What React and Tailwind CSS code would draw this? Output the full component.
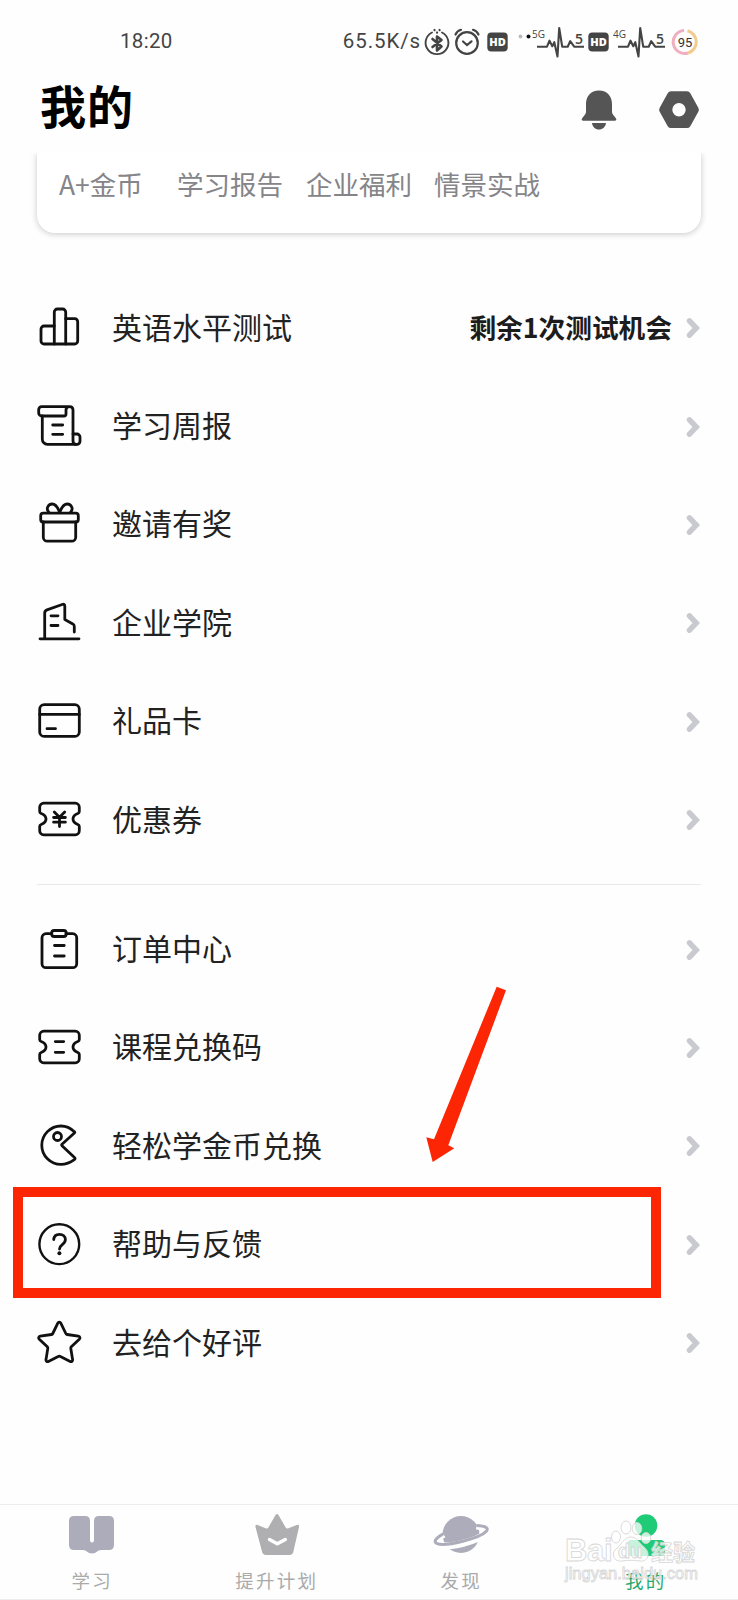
import clsx from "clsx";

const Icon = ({ children }) => (
  <svg
    viewBox="0 0 48 48"
    className="h-12 w-12 shrink-0"
    fill="none"
    stroke="#111"
    strokeWidth="2.800"
    strokeLinecap="round"
    strokeLinejoin="round"
  >
    {children}
  </svg>
);

const ticketPath =
  "M7.700 7.200h31.600a4 4 0 0 1 4 4v4.300c0 1-.6 1.600-1.500 2-6.400 2.600-6.400 8.400 0 11 .9.4 1.500 1 1.500 2v4.300a4 4 0 0 1-4 4H7.700a4 4 0 0 1-4-4v-4.300c0-1 .6-1.600 1.500-2 6.400-2.600 6.400-8.400 0-11-.9-.4-1.500-1-1.500-2v-4.300a4 4 0 0 1 4-4z";

const topItems = [
  {
    label: "英语水平测试",
    extra: "剩余1次测试机会",
    icon: (
      <>
        <path d="M18.300 22H8a3 3 0 0 0-3 3v12a3 3 0 0 0 3 3h30.700a3 3 0 0 0 3-3V17.700a3 3 0 0 0-3-3h-9" />
        <path d="M18.300 40V8a3 3 0 0 1 3-3h5.400a3 3 0 0 1 3 3v32" />
      </>
    ),
  },
  {
    label: "学习周报",
    icon: (
      <>
        <path d="M33.500 3.600H5.700a3 3 0 0 0-3 3V10a3 3 0 0 0 3 3H28c1.300 0 2-.7 2-2V7c0-2.300 1.200-3.400 3.500-3.400S37 4.700 37 7v31c0 2 1.300 3.300 3.300 3.300" />
        <path d="M6.300 13v23.300a5 5 0 0 0 5 5H41a3 3 0 0 0 3-3V34a3 3 0 0 0-3-3h-4M16.700 22h10M16.700 31.300h10" />
      </>
    ),
  },
  {
    label: "邀请有奖",
    icon: (
      <>
        <rect x="4.700" y="12.200" width="37.600" height="8.800" rx="2.500" />
        <path d="M7.300 21v15.200a4 4 0 0 0 4 4h24.400a4 4 0 0 0 4-4V21" />
        <path d="M13 11.500C9.500 8 12 3 16.200 3c4 0 6 4.500 7.500 8.500C25.200 7.500 27.200 3 31.200 3 35.400 3 38 8 34.400 11.500" />
      </>
    ),
  },
  {
    label: "企业学院",
    icon: (
      <path d="M4 39.800h39M8.700 39.500V14c0-1.700.8-2.700 2.300-3.200l15.200-5.300c1.700-.6 2.600 0 2.600 1.700v13.300l8 4.400c1 .6 1.500 1.400 1.500 2.500V33M15 16.800h7M15 26.500h7" />
    ),
  },
  {
    label: "礼品卡",
    icon: (
      <>
        <rect x="3.700" y="6.700" width="39.600" height="31.700" rx="4.500" />
        <path d="M3.700 16.400h39.600M11 30.700h8.500" />
      </>
    ),
  },
  {
    label: "优惠券",
    icon: (
      <>
        <path d={ticketPath} />
        <path d="M18.300 16l5.200 5.200 5.200-5.200M17.600 21.500h11.800M17.600 26.200h11.800M23.500 21.500v9" />
      </>
    ),
  },
];

const bottomItems = [
  {
    label: "订单中心",
    icon: (
      <>
        <path d="M15.700 7.700H10a4 4 0 0 0-4 4v26a4 4 0 0 0 4 4h26.700a4 4 0 0 0 4-4v-26a4 4 0 0 0-4-4H30" />
        <rect x="15.700" y="4.500" width="14.500" height="6" rx="2.500" />
        <path d="M18.500 19.500h9.700M18.500 30h9.700" />
      </>
    ),
  },
  {
    label: "课程兑换码",
    icon: (
      <>
        <path d={ticketPath} />
        <path d="M19.300 17.600h8.400M19.300 28.300h8.400" />
      </>
    ),
  },
  {
    label: "轻松学金币兑换",
    icon: (
      <>
        <path d="M38.300 9.700C34 5.500 29.500 4 25 4a19.200 19.200 0 1 0 0 38.400c4.500 0 9-1.500 13.300-4.700 1-.8 1-1.500.2-2.200L26 23.700c-.5-.5-.5-.9 0-1.400L38.400 11c.6-.5.5-.8-.1-1.300z" />
        <circle cx="21.500" cy="14.500" r="4" />
      </>
    ),
  },
  {
    label: "帮助与反馈",
    highlighted: true,
    icon: (
      <>
        <circle cx="23.300" cy="23.200" r="19.900" strokeWidth="2.400" />
        <path d="M17.700 18.500c.3-3.200 2.600-5.200 5.800-5.200 3.400 0 5.900 2.200 5.900 5.300 0 2.200-1.300 3.600-3.100 5-2 1.500-2.800 2.300-2.800 4.500" />
        <circle cx="23.400" cy="32.300" r="2" fill="#111" stroke="none" />
      </>
    ),
  },
  {
    label: "去给个好评",
    icon: (
      <path d="M21.800 4.200c.7-1.500 2.300-1.500 3 0l5 10.300c.3.600.7.900 1.300 1l11.200 1.700c1.700.3 2.200 1.800 1 3l-8 7.600c-.5.5-.6 1-.5 1.600l1.800 11.200c.3 1.600-1 2.500-2.400 1.800L24.400 37.500c-.7-.4-1.500-.4-2.200 0l-9.800 4.900c-1.400.7-2.700-.2-2.400-1.800l1.800-11.200c.1-.6 0-1.100-.5-1.600l-8-7.600c-1.200-1.200-.7-2.700 1-3l11.200-1.700c.6-.1 1-.4 1.300-1z" />
    ),
  },
];

const tabs = [
  {
    label: "学习",
    icon: (
      <path
        fill="#adacba"
        d="M10 5h11q5 0 5 5v19.500q0 2 2 2t2-2V10q0-5 5-5h10q5 0 5 5v24q0 5-5 5H37c-3 0-5 3.500-9 3.500S22 39 19 39h-9q-5 0-5-5V10q0-5 5-5z"
      />
    ),
  },
  {
    label: "提升计划",
    icon: (
      <>
        <path
          fill="#afaeb0"
          d="M26.400 4.200q1.600-2.400 3.200 0l7.200 12.600q.8 1.200 2 .6l9-3.400q2.600-.8 2.200 2l-5.600 24.600q-.6 3.400-4 3.400H17q-3.400 0-4-3.400L6.500 16q-.4-2.800 2.200-2l8.500 3.400q1.200.6 2-.6z"
        />
        <path
          d="M20.500 28.500l7.800 4.200 8-4.200"
          fill="none"
          stroke="#fff"
          strokeWidth="3.500"
          strokeLinecap="round"
        />
      </>
    ),
  },
  {
    label: "发现",
    icon: (
      <>
        <circle cx="28" cy="23.500" r="18.500" fill="#adacba" />
        <g fill="none" transform="rotate(-14 28 23.500)">
          <path
            d="M11 19C-8 26 6 32.500 28 32.500S64 26 45 19"
            stroke="#fff"
            strokeWidth="7"
          />
          <path
            d="M11 18.500C-8 24 2 30.500 28 30.500S64 24 45 18.500"
            stroke="#adacba"
            strokeWidth="3"
          />
        </g>
      </>
    ),
  },
  {
    label: "我的",
    active: true,
    icon: (
      <>
        <circle cx="28" cy="14.500" r="11.300" fill="#20cb78" />
        <path
          fill="#20cb78"
          d="M14 29h28q5 0 5 5v7q0 4-4 4H13q-4 0-4-4v-7q0-5 5-5z"
        />
      </>
    ),
  },
];

const HdBadge = () => (
  <svg viewBox="0 0 21 20" className="h-5 w-[21px] shrink-0">
    <rect x="0.300" y="0.500" width="20.400" height="19" rx="4" fill="#444" />
    <text
      x="10.500"
      y="14"
      textAnchor="middle"
      fill="#fff"
      className="font-['Open_Sans',sans-serif] text-[11px] font-extrabold"
    >
      HD
    </text>
  </svg>
);

const Signal = ({ type }) => (
  <svg viewBox="0 0 54 34" className="h-[34px] w-[54px] shrink-0">
    <text
      x="0"
      y="13"
      fill="#444"
      className="font-['Open_Sans',sans-serif] text-[10px]"
    >
      {type}
    </text>
    <path
      d="M5 21.700h10l2.500-6 2.800 5.500 2-4 3.200 14.300L27.200 3l3 18.700h5.500l2.500-5.500 4 5.500H52"
      fill="none"
      stroke="#444"
      strokeWidth="2.100"
      strokeLinejoin="round"
    />
    <text
      x="43"
      y="18.800"
      fill="#444"
      className="font-['Open_Sans',sans-serif] text-[14px] font-semibold"
    >
      5
    </text>
  </svg>
);

const StatusBar = () => (
  <div className="flex h-[83px] shrink-0 items-center justify-between pr-[39px] pl-[120px] font-['Roboto',sans-serif] text-[20.500px] text-[#444]">
    <span className="tracking-[0.300px]">18:20</span>
    <div className="flex items-center">
      <span className="tracking-[0.900px]">65.5K/s</span>
      <svg
        viewBox="0 0 28 32"
        className="ml-[2px] h-8 w-7"
        fill="none"
        stroke="#444"
        strokeWidth="1.900"
        strokeLinecap="round"
      >
        <path d="M9 6.500a11.400 11.400 0 1 0 10 0" />
        <path
          d="M9.500 13l9 7.500-4.500 4V10.500l4.500 3.500-9 7"
          strokeWidth="2.600"
          strokeLinejoin="round"
        />
        <path d="M11.500 4l.1.100M16.500 4l.1.100M14 6.500l.1.100" strokeWidth="2.200" />
      </svg>
      <svg
        viewBox="0 0 28 32"
        className="ml-[2px] h-8 w-7"
        fill="none"
        stroke="#444"
        strokeWidth="2.200"
        strokeLinecap="round"
      >
        <circle cx="14" cy="17" r="10.800" />
        <path d="M10 15.500l4 3.600 4.500-3.800M2.500 8.500Q4 5 8 3.800M20 3.800q4 1.200 5.500 4.700" />
      </svg>
      <div className="ml-[6px] flex items-center">
        <HdBadge />
        <svg viewBox="0 0 24 20" className="h-5 w-6">
          <circle cx="12.500" cy="4.500" r="1.900" fill="#bbb" />
          <circle cx="20.500" cy="4.500" r="2" fill="#111" />
        </svg>
        <Signal type="5G" />
      </div>
      <div className="ml-[2px] flex items-center">
        <HdBadge />
        <span className="w-1" />
        <Signal type="4G" />
      </div>
      <svg viewBox="0 0 28 28" className="ml-1 h-7 w-7" fill="none">
        <path d="M13 2.500A11.500 11.500 0 1 0 17 25" stroke="#efafc0" strokeWidth="3" />
        <path d="M16.500 2.800A11.500 11.500 0 0 1 17 25" stroke="#f2cb8d" strokeWidth="3" />
        <text
          x="14"
          y="18.500"
          textAnchor="middle"
          fill="#333"
          className="font-['Roboto',sans-serif] text-[13px]"
        >
          95
        </text>
      </svg>
    </div>
  </div>
);

const MenuRow = ({ item }) => (
  <div className="relative flex h-[98.400px] items-center pr-[38px] pl-9">
    <Icon>{item.icon}</Icon>
    <span className="ml-7 grow pb-[5px] text-[30px] leading-none text-[#222]">
      {item.label}
    </span>
    {item.extra && (
      <span className="mr-[14px] pb-[2px] text-[26.700px] leading-none font-bold text-[#1c1c1c]">
        {item.extra}
      </span>
    )}
    <svg viewBox="0 0 14 22" className="h-[22px] w-[14px]">
      <path
        d="M3.500 3.800L10.300 11l-6.800 7.200"
        fill="none"
        stroke="#c9c9d0"
        strokeWidth="5.500"
        strokeLinecap="round"
      />
    </svg>
    {item.highlighted && (
      <div className="absolute top-[-9px] left-[13px] h-[111px] w-[648px] border-[10px] border-[#fc2604]" />
    )}
  </div>
);

const Watermark = () => (
  <div className="absolute top-[13px] left-[565px] w-[140px] text-white/75 [-webkit-text-stroke:0.800px_#d6d6d6]">
    <div className="flex h-[46px] items-end font-['Liberation_Sans',sans-serif] text-[31px] leading-none font-bold">
      <span className="mb-[-2px] w-[46px] tracking-[-0.300px]">Bai</span>
      <svg
        viewBox="0 0 41 44"
        className="h-11 w-[41px] shrink-0"
        fill="#fff"
        fillOpacity="0.75"
        stroke="#d6d6d6"
        strokeWidth="0.900"
      >
        <ellipse cx="5" cy="17" rx="4.500" ry="6" />
        <ellipse cx="15" cy="7.500" rx="5" ry="6.500" />
        <ellipse cx="26" cy="8.500" rx="4.800" ry="6" />
        <ellipse cx="35" cy="18" rx="4.800" ry="5.500" />
        <path d="M20 17c6 0 8 6 13 10 8 7 3 15-4 14-6-1-12-1-18 0-8 1-12-7-5-13 5-4 7-11 14-11z" />
        <text
          x="7"
          y="38"
          className="font-['Liberation_Sans',sans-serif] text-[20px] font-bold"
        >
          du
        </text>
      </svg>
      <span className="mb-[3px] ml-[-1px] font-['Noto_Sans_CJK_SC',sans-serif] text-[22px] whitespace-nowrap">
        经验
      </span>
    </div>
    <div className="mt-[-1px] font-['Liberation_Sans',sans-serif] text-[16.500px] leading-[20px]">
      jingyan.baidu.com
    </div>
  </div>
);

const App = () => {
  return (
    <div className="relative flex h-[1600px] w-[738px] flex-col overflow-hidden bg-[#fefefe] font-['Noto_Sans_CJK_SC',sans-serif]">
      <StatusBar />

      <div className="flex h-[70px] shrink-0 items-start justify-between pr-[38px] pl-[40px]">
        <h1 className="mt-[-2px] text-[46px] leading-[46px] font-bold tracking-[1px] text-black">
          我的
        </h1>
        <div className="flex gap-[41px] pt-[7px]">
          <svg viewBox="0 0 36 40" className="h-10 w-9" fill="#555">
            <path d="M18 .5C9.500.5 5 6.500 5 14v7.500c0 1.500-.5 2.500-1.500 3.700L1.300 28c-1.300 1.700-.5 2.700 1 2.700h31.400c1.500 0 2.300-1 1-2.700l-2.200-2.800c-1-1.200-1.500-2.200-1.500-3.700V14C31 6.500 26.500.5 18 .5zM11 33h14c-.5 4-3.300 6.500-7 6.500S11.500 37 11 33z" />
          </svg>
          <svg viewBox="0 0 42 40" className="h-10 w-[42px]">
            <path
              fill="#555"
              fillRule="evenodd"
              d="M13 1.300h16q2.200 0 3.300 1.900l8 14.500q1.100 2 0 4l-8 14.500q-1.100 1.900-3.300 1.900H13q-2.200 0-3.300-1.900l-8-14.500q-1.100-2 0-4l8-14.500Q10.800 1.300 13 1.300zM21 13a6.700 6.700 0 1 0 0 13.400A6.700 6.700 0 1 0 21 13z"
            />
          </svg>
        </div>
      </div>

      <div className="h-[102px] shrink-0 overflow-hidden px-[37px]">
        <div className="flex h-20 items-start rounded-b-[18px] bg-white pt-[18px] pl-[22px] text-[26.500px] leading-[26px] whitespace-nowrap text-[#858589] shadow-[0_1px_6px_rgba(0,0,0,0.220)]">
          <span className="w-[118px]">A+金币</span>
          <span className="w-[129px]">学习报告</span>
          <span className="w-[128px]">企业福利</span>
          <span>情景实战</span>
        </div>
      </div>

      <div className="pt-[24px]">
        {topItems.map((item) => (
          <MenuRow key={item.label} item={item} />
        ))}
      </div>
      <div className="mx-[37px] mt-[15px] mb-[15px] h-[1px] shrink-0 bg-[#e9e9e9]" />
      <div>
        {bottomItems.map((item) => (
          <MenuRow key={item.label} item={item} />
        ))}
      </div>

      {/* pointer arrow */}
      <svg
        viewBox="0 0 82 178"
        className="absolute top-[986px] left-[425px] h-[178px] w-[82px]"
      >
        <path
          d="M71.700.7L81 4.300 23.300 159.300l6 3L7.700 176 1.300 151.300l7.700 2z"
          fill="#fc2604"
        />
      </svg>

      <div className="relative mt-auto flex h-24 shrink-0 border-t border-b border-[#eee]">
        {tabs.map((tab) => (
          <div key={tab.label} className="flex flex-1 flex-col items-center pt-[6px]">
            <svg viewBox="0 0 56 48" className="h-12 w-14 overflow-visible">
              {tab.icon}
            </svg>
            <span
              className={clsx(
                "mt-[9px] text-[18.500px] leading-[24px] tracking-[2.200px]",
                tab.active ? "text-[#27a76b]" : "text-[#aaa]"
              )}
            >
              {tab.label}
            </span>
          </div>
        ))}
        <Watermark />
      </div>
    </div>
  );
};

export default App;
